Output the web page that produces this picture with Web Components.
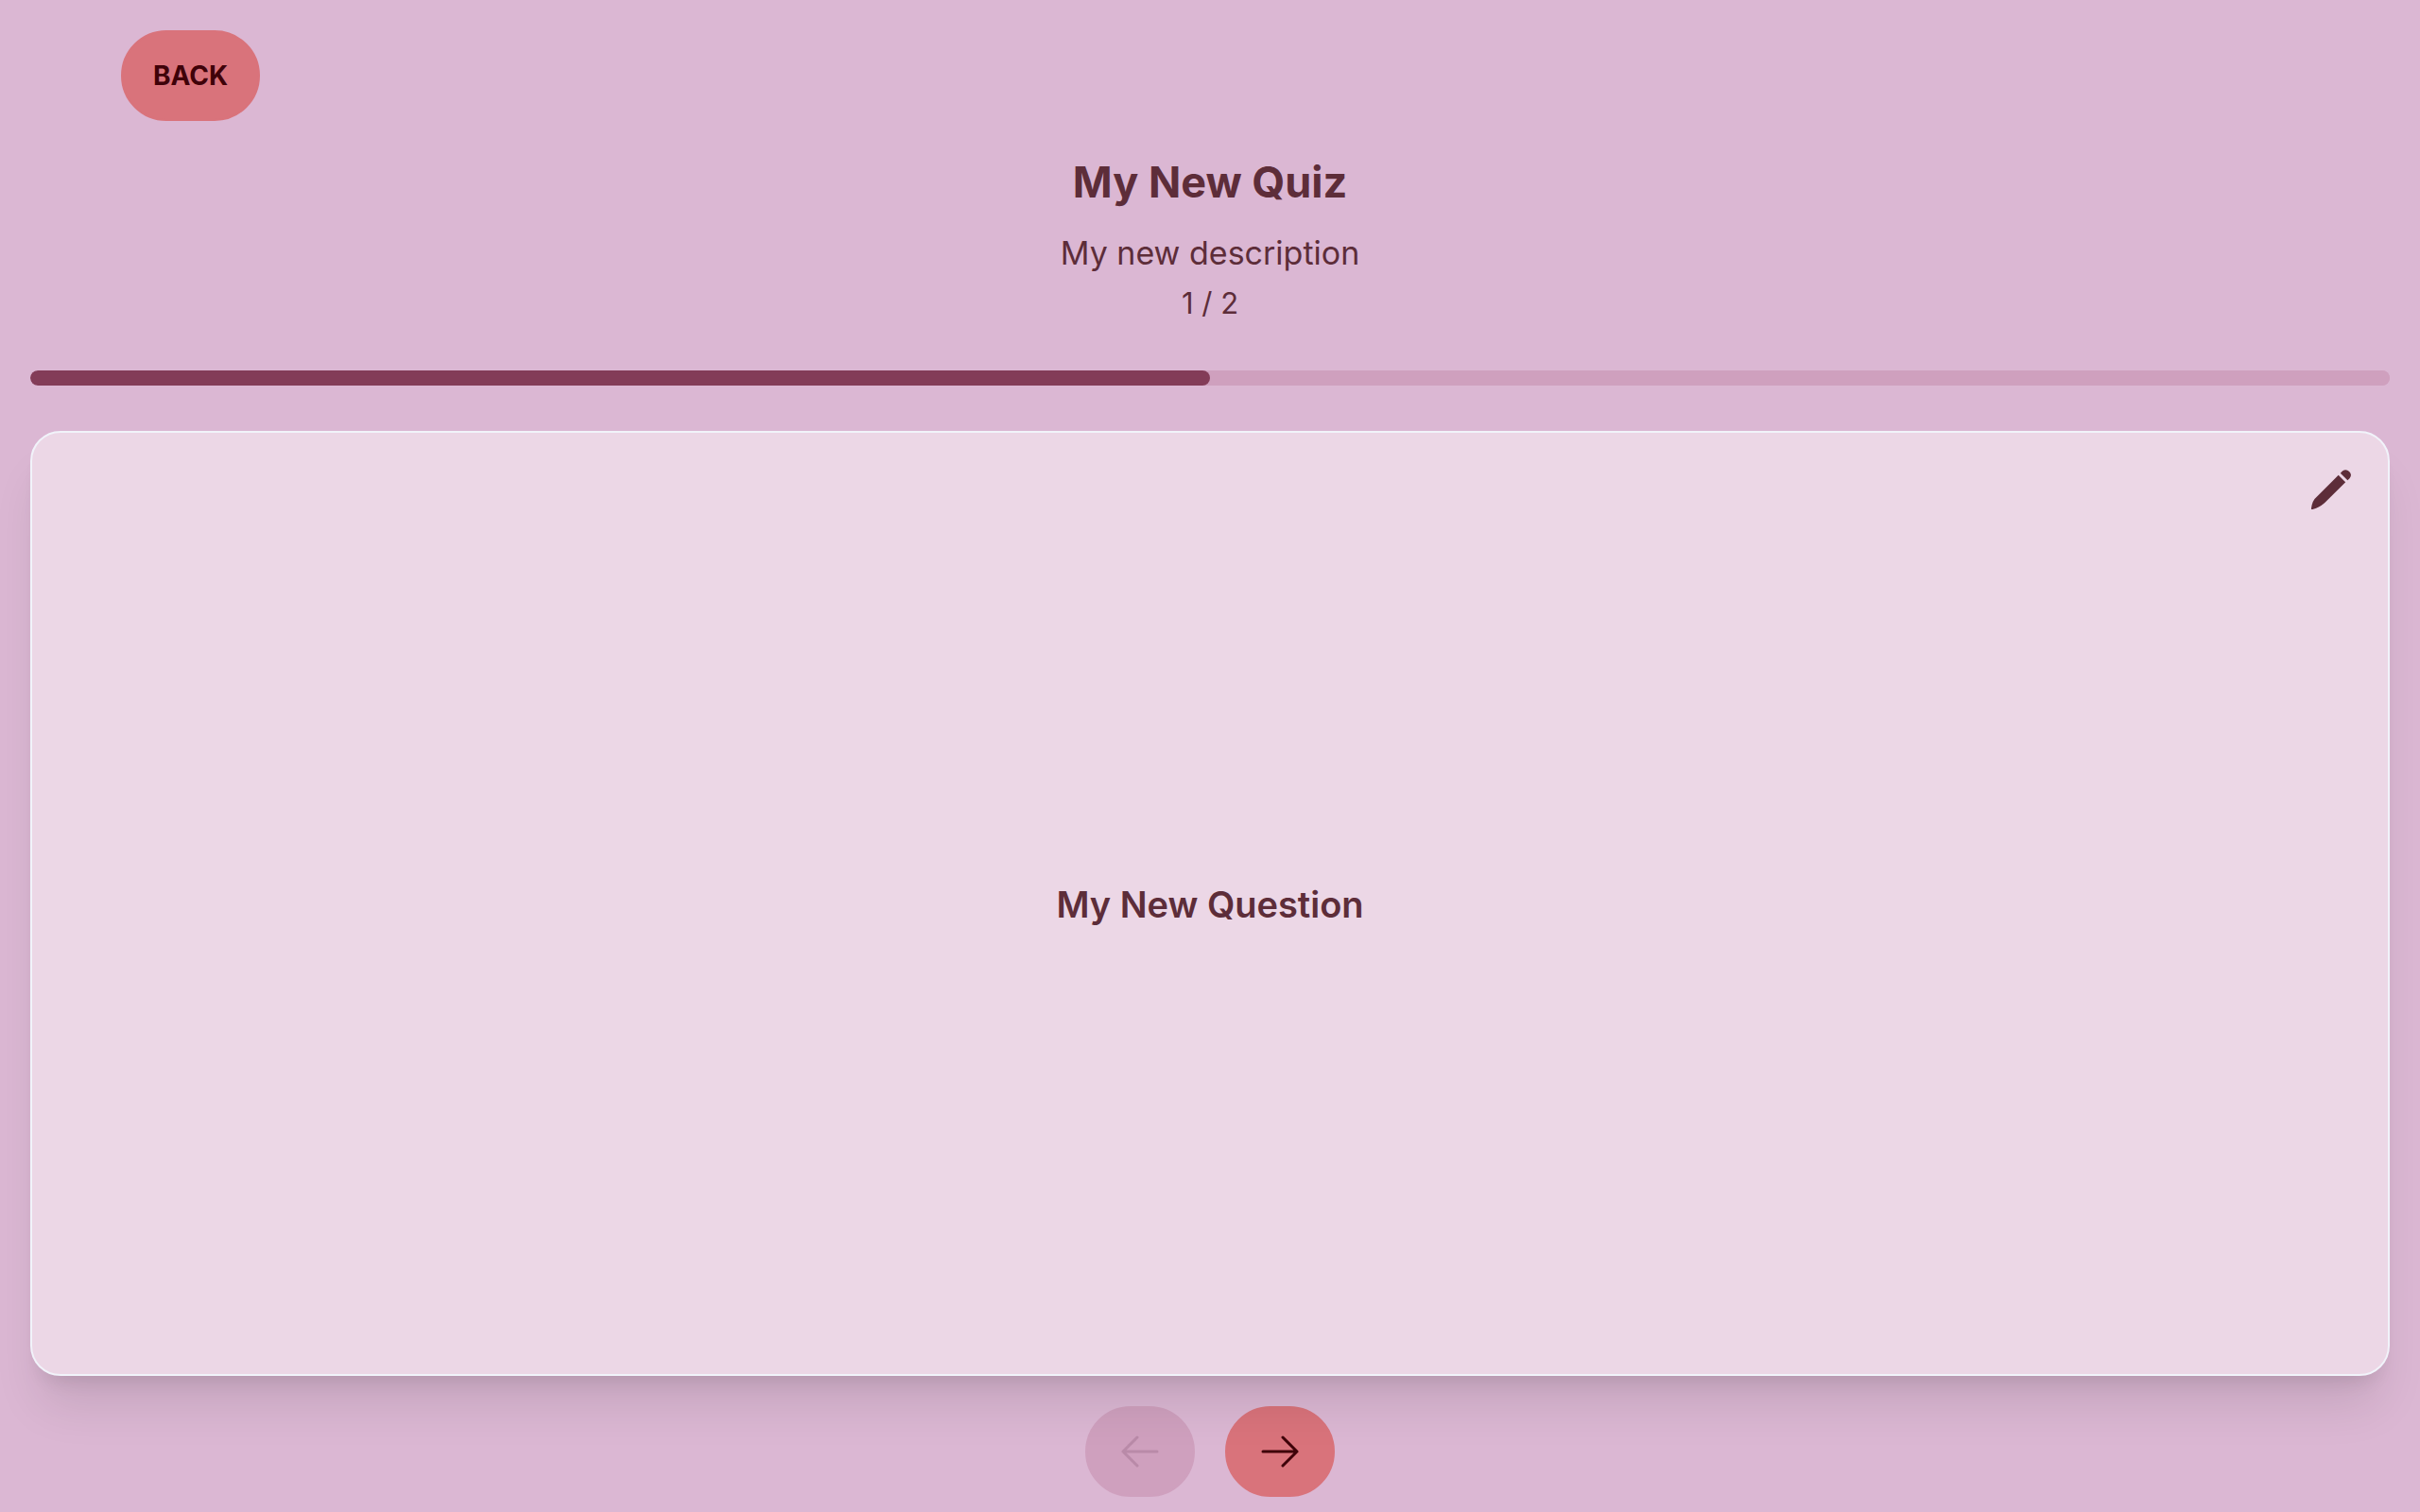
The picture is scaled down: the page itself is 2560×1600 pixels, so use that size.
<!DOCTYPE html>
<html lang="en">
<head>
<meta charset="utf-8">
<title>My New Quiz</title>
<style>
body{margin:0;background:#dbb7d3;color:#5d2d39;font-family:Inter,"Liberation Sans",sans-serif;-webkit-font-smoothing:antialiased}
</style>
</head>
<body>
<quiz-page>
  <quiz-button slot="nav">BACK</quiz-button>
  <quiz-header slot="header">
    <span slot="title">My New Quiz</span>
    <span slot="description">My new description</span>
    <span slot="count">1 / 2</span>
  </quiz-header>
  <quiz-progress value="1" max="2"></quiz-progress>
  <quiz-card>My New Question</quiz-card>
  <quiz-pager slot="footer"></quiz-pager>
</quiz-page>
<script>
const define = (name, html, setup) => customElements.define(name, class extends HTMLElement {
  connectedCallback() {
    if (this.shadowRoot) return;
    const root = this.attachShadow({ mode: 'open' });
    root.innerHTML = html;
    if (setup) setup(this, root);
  }
});

define('quiz-page', `
<style>
:host{display:flex;flex-direction:column;min-height:100vh;box-sizing:border-box;padding-bottom:16px}
nav{padding:32px 128px;display:flex}
main{flex:1;display:flex;flex-direction:column;gap:48px;padding:0 32px}
footer{padding-top:32px}
</style>
<nav><slot name="nav"></slot></nav>
<slot name="header"></slot>
<main><slot></slot></main>
<footer><slot name="footer"></slot></footer>`);

define('quiz-button', `
<style>
:host{display:block}
button{display:flex;align-items:center;justify-content:center;height:96px;padding:0 32px;border:2px solid #d9737b;border-radius:48px;background:#d9737b;color:#3f0209;font:700 28px/28px Inter,"Liberation Sans",sans-serif;cursor:pointer}
button:disabled{background:#cfa0be;border-color:#cfa0be;color:#b98aa8;cursor:default}
</style>
<button type="button"><slot></slot></button>`, (el, root) => {
  const b = root.querySelector('button');
  b.disabled = el.hasAttribute('disabled');
  if (el.hasAttribute('label')) b.setAttribute('aria-label', el.getAttribute('label'));
});

define('quiz-header', `
<style>
:host{display:flex;flex-direction:column;align-items:center;text-align:center;padding-bottom:46px}
h1{margin:0 0 14px;font-size:45px;line-height:66px;font-weight:700}
p{margin:0;font-size:34px;line-height:56px}
.count{font-size:31px;line-height:50px}
</style>
<h1><slot name="title"></slot></h1>
<p><slot name="description"></slot></p>
<p class="count"><slot name="count"></slot></p>`);

define('quiz-progress', `
<style>
:host{display:block}
progress{appearance:none;display:block;width:100%;height:16px;border:0;border-radius:8px;overflow:hidden;background:#cfa0be}
progress::-webkit-progress-bar{background:#cfa0be;border-radius:8px}
progress::-webkit-progress-value{background:#833c58;border-radius:8px}
</style>
<progress aria-label="Quiz progress"></progress>`, (el, root) => {
  const p = root.querySelector('progress');
  p.max = el.getAttribute('max');
  p.value = el.getAttribute('value');
});

define('quiz-card', `
<style>
:host{flex:1;display:flex;align-items:center;justify-content:center;position:relative;z-index:1;box-sizing:border-box;border:2px solid #f1f3fa;border-radius:32px;background:#ecd7e6;box-shadow:0 40px 50px -10px rgba(0,0,0,.1),0 16px 20px -12px rgba(0,0,0,.1)}
h2{margin:0;padding-top:2px;font-size:38px;line-height:56px;font-weight:600}
button{position:absolute;top:32px;right:32px;padding:4px;border:0;background:none;color:inherit;cursor:pointer}
svg{display:block}
</style>
<h2><slot></slot></h2>
<button type="button" aria-label="Edit question">
<svg width="48" height="48" viewBox="0 0 48 48" fill="currentColor"><path d="M31.700 8.800 39.200 16.300 17 38.300Q11 43.500 4.300 45 2.700 45.300 3 43.700 4 35.500 9 31.500Z"/><path d="M33.800 6.700 35.900 4.600A5.400 5.400 0 0 1 43.500 12.200L41.400 14.300Z"/></svg>
</button>`);

define('quiz-pager', `
<style>
:host{display:flex;justify-content:center;gap:32px}
svg{display:block;fill:none;stroke:currentColor;stroke-width:1.5;stroke-linecap:round;stroke-linejoin:round}
</style>
<quiz-button disabled label="Previous question"><svg width="48" height="48" viewBox="0 0 24 24"><path d="M10.5 19.5 3 12m0 0 7.500-7.500M3 12h18"/></svg></quiz-button>
<quiz-button label="Next question"><svg width="48" height="48" viewBox="0 0 24 24"><path d="M13.500 4.500 21 12m0 0-7.500 7.500M21 12H3"/></svg></quiz-button>`);
</script>
</body>
</html>
